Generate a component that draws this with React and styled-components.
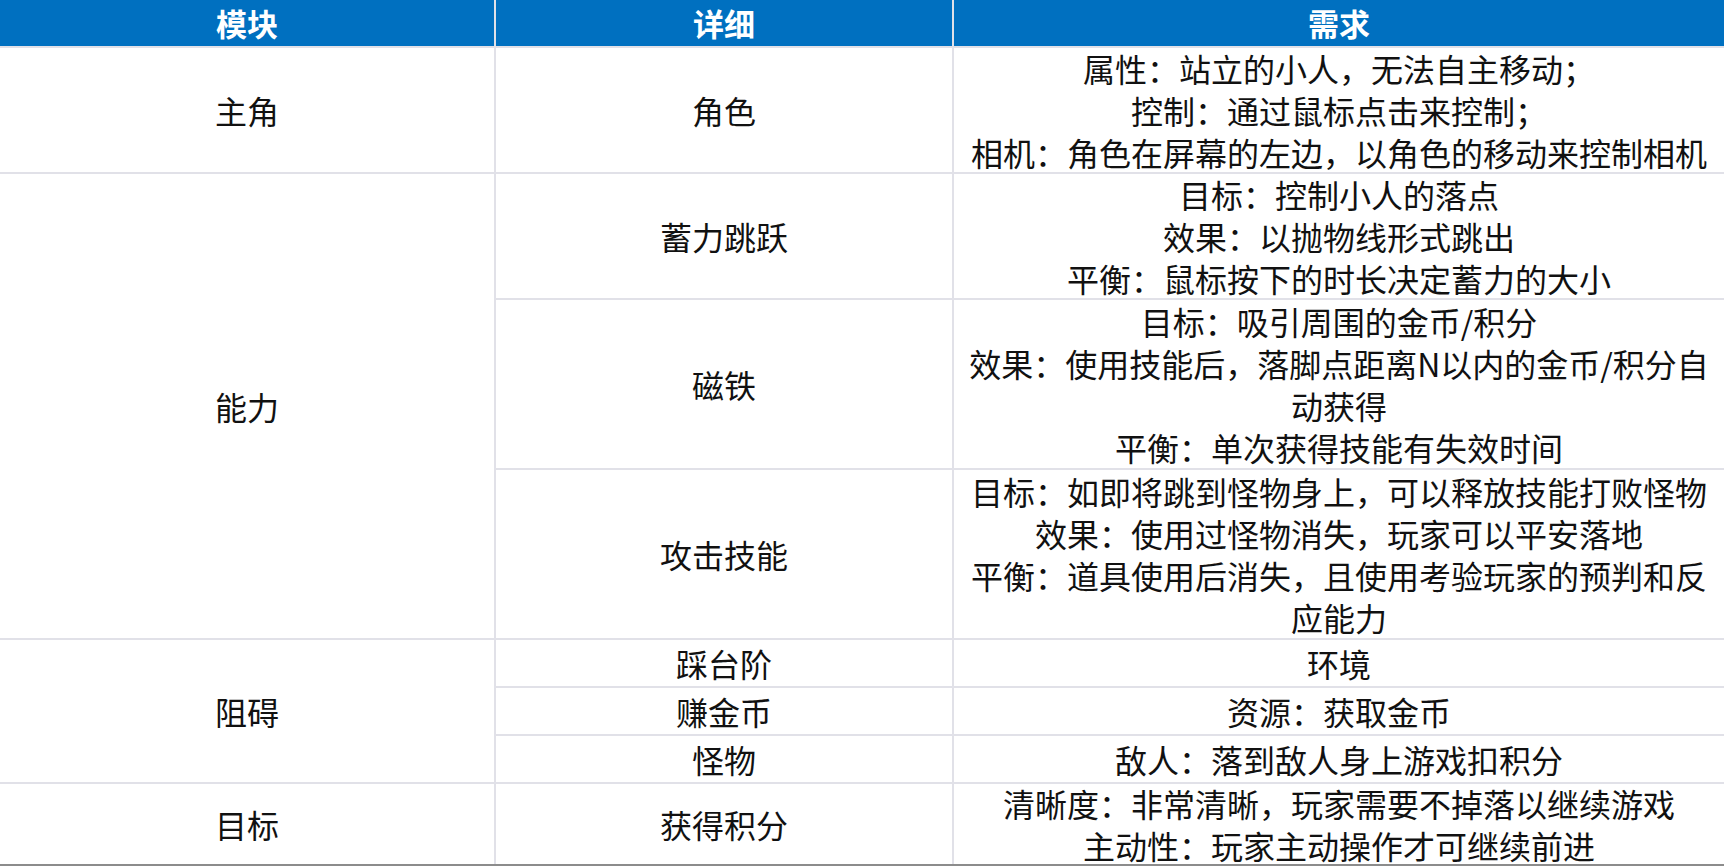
import React from 'react';
import styled, {createGlobalStyle} from 'styled-components';

const GlobalStyle = createGlobalStyle`
  html, body {
    margin: 0;
    padding: 0;
    background: #ffffff;
  }
  body {
    font-family: "Noto Sans CJK SC", "Noto Sans", sans-serif;
  }
`

const Table = styled.div`
  display: grid;
  width: 1724px;
  grid-template-columns: 494px 456px 770px;
  grid-template-rows: 46px 124px 124px 168px 168px 46px 46px 46px 80px;
  gap: 2px;
  background-color: #e1e1e8;
  border-bottom: 2px solid #8c8c8c;
`

const HeadCell = styled.div`
  display: flex;
  align-items: center;
  justify-content: center;
  background-color: #0070c0;
  color: #ffffff;
  font-size: 31px;
  font-weight: 700;
  line-height: 46px;
`

const Cell = styled.div`
  grid-column: ${props => props.col};
  grid-row: ${props => props.span > 1 ? `span ${props.span}` : 'auto'};
  display: flex;
  flex-direction: column;
  align-items: center;
  justify-content: center;
  background-color: #ffffff;
  color: #111111;
  font-size: 32px;
  line-height: 42px;
  text-align: center;
`

const Line = styled.div`
  white-space: nowrap;
`

const sections = [
    {
        module: '主角',
        items: [
            {
                detail: '角色',
                lines: [
                    '属性：站立的小人，无法自主移动；',
                    '控制：通过鼠标点击来控制；',
                    '相机：角色在屏幕的左边，以角色的移动来控制相机',
                ],
            },
        ],
    },
    {
        module: '能力',
        items: [
            {
                detail: '蓄力跳跃',
                lines: [
                    '目标：控制小人的落点',
                    '效果：以抛物线形式跳出',
                    '平衡：鼠标按下的时长决定蓄力的大小',
                ],
            },
            {
                detail: '磁铁',
                lines: [
                    '目标：吸引周围的金币/积分',
                    '效果：使用技能后，落脚点距离N以内的金币/积分自',
                    '动获得',
                    '平衡：单次获得技能有失效时间',
                ],
            },
            {
                detail: '攻击技能',
                lines: [
                    '目标：如即将跳到怪物身上，可以释放技能打败怪物',
                    '效果：使用过怪物消失，玩家可以平安落地',
                    '平衡：道具使用后消失，且使用考验玩家的预判和反',
                    '应能力',
                ],
            },
        ],
    },
    {
        module: '阻碍',
        items: [
            {detail: '踩台阶', lines: ['环境']},
            {detail: '赚金币', lines: ['资源：获取金币']},
            {detail: '怪物', lines: ['敌人：落到敌人身上游戏扣积分']},
        ],
    },
    {
        module: '目标',
        items: [
            {
                detail: '获得积分',
                lines: [
                    '清晰度：非常清晰，玩家需要不掉落以继续游戏',
                    '主动性：玩家主动操作才可继续前进',
                ],
            },
        ],
    },
];

const App = () => {
    return (
        <>
            <GlobalStyle/>
            <Table>
                <HeadCell>模块</HeadCell>
                <HeadCell>详细</HeadCell>
                <HeadCell>需求</HeadCell>
                {sections.map(section => (
                    <React.Fragment key={section.module}>
                        <Cell col={1} span={section.items.length}>{section.module}</Cell>
                        {section.items.map(item => (
                            <React.Fragment key={item.detail}>
                                <Cell col={2}>{item.detail}</Cell>
                                <Cell col={3}>
                                    {item.lines.map(line => <Line key={line}>{line}</Line>)}
                                </Cell>
                            </React.Fragment>
                        ))}
                    </React.Fragment>
                ))}
            </Table>
        </>
    )
};

export default App;
